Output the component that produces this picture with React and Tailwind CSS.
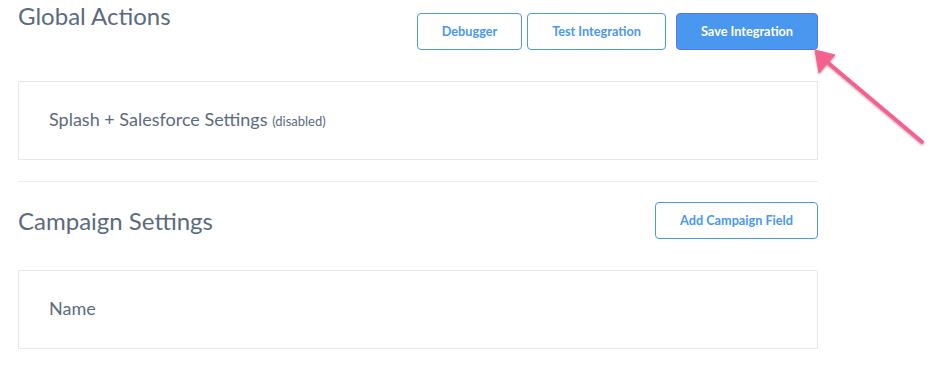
import React from 'react';

const font = { fontFamily: 'Lato, "Open Sans", sans-serif' };

const OutlineButton = ({ children, className = '' }) => (
  <button
    className={`h-[37px] rounded-[4px] border border-[#4a97f0] bg-white text-[12.7px] font-bold text-[#4a97f0] ${className}`}
  >
    {children}
  </button>
);

const Card = ({ children }) => (
  <div className="flex h-[79px] items-center border border-[#e6e8ea] bg-white pb-[3px] pl-[30px] text-[18px] text-[#5a6b80]">
    {children}
  </div>
);

// Pink arrow pointing at the save button
const Arrow = () => (
  <svg className="pointer-events-none absolute left-0 top-0" width="950" height="366">
    <defs>
      <filter id="shadow" x="-20%" y="-20%" width="140%" height="140%">
        <feDropShadow dx="0" dy="1" stdDeviation="1" floodColor="#000" floodOpacity="0.35" />
      </filter>
    </defs>
    <g filter="url(#shadow)" fill="#f5618e" stroke="#f5618e">
      <line x1="922" y1="142" x2="827" y2="62" strokeWidth="4" strokeLinecap="round" />
      <polygon points="815,50 835,55 819,73" strokeWidth="1" strokeLinejoin="round" />
    </g>
  </svg>
);

export default function App() {
  return (
    <div className="relative h-[366px] w-[950px] overflow-hidden bg-white" style={font}>
      <div className="ml-[18px] w-[800px]">
        {/* Global actions header */}
        <div className="flex items-start justify-between">
          <h2 className="text-[24px] leading-[32px] text-[#5a6b80]">Global Actions</h2>
          <div className="mt-[13px] flex">
            <OutlineButton className="w-[105px]">Debugger</OutlineButton>
            <OutlineButton className="ml-[5px] w-[139px]">Test Integration</OutlineButton>
            <button className="ml-[10px] h-[37px] w-[142px] rounded-[4px] border border-[#5b74ee] bg-[#4a97f0] text-[12.7px] font-bold text-white">
              Save Integration
            </button>
          </div>
        </div>

        <div className="mt-[31px]">
          <Card>
            <span>
              Splash + Salesforce Settings{' '}
              <span className="text-[13px]">(disabled)</span>
            </span>
          </Card>
        </div>

        <div className="mt-[21px] border-t border-[#eceef0]" />

        {/* Campaign settings header */}
        <div className="mt-[20px] flex items-center justify-between">
          <h2 className="text-[24px] leading-[32px] text-[#5a6b80]">Campaign Settings</h2>
          <OutlineButton className="w-[163px]">Add Campaign Field</OutlineButton>
        </div>

        <div className="mt-[31px]">
          <Card>
            <span>Name</span>
          </Card>
        </div>
      </div>
      <Arrow />
    </div>
  );
}
